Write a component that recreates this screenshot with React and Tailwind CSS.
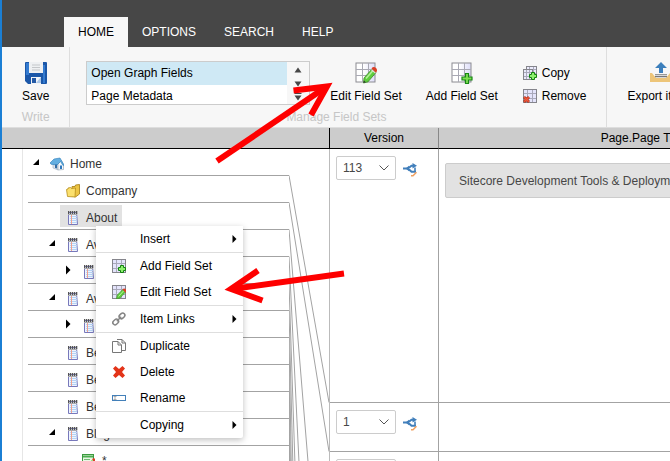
import React from "react";

function LargeGrid({ children }) {
  return (
    <svg width="22" height="22" viewBox="0 0 22 22" aria-hidden="true" className="block">
      <defs>
        <linearGradient id="cell" x1="0" y1="0" x2="1" y2="0">
          <stop offset="0.4" stopColor="#fff" />
          <stop offset="1" stopColor="#dcdcf8" />
        </linearGradient>
      </defs>
      <rect x="1" y="1" width="19" height="19" fill="url(#cell)" stroke="#8c8c92" />
      <path d="M7.5 1v19M13.5 1v19M1 7.5h19M1 13.5h19" stroke="#a9a9b4" fill="none" />
      {children}
    </svg>
  );
}

function SmallGrid({ children }) {
  return (
    <svg width="14" height="14" viewBox="0 0 14 14" aria-hidden="true" className="block shrink-0">
      <rect x="0.5" y="0.5" width="13" height="13" fill="#e4e4fb" stroke="#85858c" />
      <path d="M4.5 1v12M9.5 1v12M1 4.5h12M1 9.5h12" stroke="#a9a9bb" fill="none" />
      {children}
    </svg>
  );
}

function BigPencil() {
  return (
    <g>
      <path d="M8.5 21l.5-5 8-9 4 3.5-8 9.300z" fill="#5fce3d" stroke="#3c8b27" strokeWidth="0.8" />
      <path d="M11 16.500l7-8" stroke="#b6f29c" strokeWidth="1.500" />
      <path d="M16.500 7.500l4 3.500" stroke="#ddd" strokeWidth="1.500" />
      <path d="M16.500 6.500q2-2.500 4.500-.5 2 2 0 4.800z" fill="#dc3e25" />
      <path d="M8.500 21l.4-2.600 2 1.800z" fill="#333" />
    </g>
  );
}

function SmallPencil() {
  return (
    <g>
      <path d="M4.500 14l.8-4 5.500-5.500 2.700 2.500-5.500 6z" fill="#5fce3d" stroke="#3c8b27" strokeWidth="0.600" />
      <path d="M6.500 11.500l5-5.500" stroke="#b6f29c" />
      <path d="M10.500 4.500q1.500-2 3.500 0v3.500z" fill="#dc3e25" />
    </g>
  );
}

function SmallPlus() {
  return <path d="M8.500 6.500h3v2h2v3h-2v2h-3v-2h-2v-3h2z" fill="#8df06d" stroke="#12800f" />;
}

function SaveIcon() {
  return (
    <svg width="22" height="22" viewBox="0 0 22 22" aria-hidden="true" className="block">
      <path d="M1 0h20q1 0 1 1v20q0 1-1 1H3l-3-3V1q0-1 1-1z" fill="#1b57a8" />
      <path d="M1 1h3v12H1zM18 3h2v18h-2z" fill="#347bd0" />
      <path d="M4 0h14v11H4z" fill="#eef0f2" />
      <path d="M7 3h8M7 5.500h8M7 8h8" stroke="#c4c7ca" />
      <path d="M6 15h10v7H6z" fill="#f1f4f7" />
      <path d="M7 16h4v5H7z" fill="#2459a5" />
      <path d="M16 15v6h-5z" fill="#abc7e8" />
    </svg>
  );
}

function EditGrid() {
  return <LargeGrid><BigPencil /></LargeGrid>;
}

function AddGrid() {
  return (
    <LargeGrid>
      <path d="M14.500 11.500h3v3.500h3.500v3h-3.500v3.500h-3v-3.500h-3.500v-3h3.500z" fill="#7ddf53" stroke="#168713" strokeWidth="1.200" />
    </LargeGrid>
  );
}

function ExportIcon() {
  return (
    <svg width="22" height="22" viewBox="0 0 22 22" aria-hidden="true" className="block">
      <path d="M0 11h2l4 5h10l4-5h2v9H0z" fill="#edc579" />
      <path d="M5 12.500h12" stroke="#999" />
      <path d="M5 14.500h12" stroke="#777" strokeWidth="1.500" />
      <path d="M11 0l6 6h-4v5H9V6H5z" fill="#3c7fbc" />
    </svg>
  );
}

function CopyGridIcon() {
  return (
    <svg width="14" height="14" viewBox="0 0 14 14" aria-hidden="true" className="block">
      <rect x="3.500" y="0.500" width="10" height="10" fill="#ececfc" stroke="#85858c" />
      <path d="M6.500 1v9M10.500 1v9M4 3.500h9M4 7.500h9" stroke="#a9a9bb" fill="none" />
      <rect x="0.500" y="3.500" width="9" height="10" fill="#e9e9fa" stroke="#85858c" />
      <path d="M3.500 4v9M6.500 4v9M1 6.500h8M1 10.500h8" stroke="#a9a9bb" fill="none" />
      <SmallPlus />
    </svg>
  );
}

function RemoveGridIcon() {
  return (
    <SmallGrid>
      <path d="M1 8l5 5M6 8l-5 5" stroke="#a92b18" strokeWidth="2.800" />
      <path d="M1.200 8.200l4.600 4.600M5.800 8.200l-4.600 4.600" stroke="#f0573a" strokeWidth="1.600" />
    </SmallGrid>
  );
}

function LinkIcon() {
  return (
    <svg width="14" height="14" viewBox="0 0 14 14" aria-hidden="true" className="block shrink-0">
      <g fill="none" stroke="#858585" strokeWidth="1.500">
        <rect x="-3.100" y="-2.200" width="6.200" height="4.400" rx="2.200" transform="translate(3.700 10) rotate(-42)" />
        <rect x="-3.100" y="-2.200" width="6.200" height="4.400" rx="2.200" transform="translate(10 3.900) rotate(-42)" />
        <path d="M4.800 9.200l4.400-4.400" />
      </g>
    </svg>
  );
}

function DuplicateIcon() {
  return (
    <svg width="14" height="14" viewBox="0 0 14 14" aria-hidden="true" className="block shrink-0">
      <path d="M5 0.500h5l3.500 3.500v7.500h-4M10 0.500v3.500h3.500" fill="#fff" stroke="#777" />
      <path d="M0.500 2.500h5.500l3.500 3.500v7.500h-9zM6 2.500v3.500h3.500" fill="#fff" stroke="#777" />
    </svg>
  );
}

function DeleteIcon() {
  return (
    <svg width="14" height="14" viewBox="0 0 14 14" aria-hidden="true" className="block shrink-0">
      <path d="M3.500 1L7 4l3.500-3L13 3.500 10 7l3 3.500-2.500 2.500L7 10l-3.500 3L1 10.500 4 7 1 3.500z" fill="#e33419" />
    </svg>
  );
}

function RenameIcon() {
  return (
    <svg width="14" height="14" viewBox="0 0 14 14" aria-hidden="true" className="block shrink-0">
      <rect x="0.500" y="4.500" width="13" height="5" fill="#fff" stroke="#4380b9" />
      <path d="M1.500 5.500h3M3 5.500v3M1.500 8.500h3" stroke="#999" strokeWidth="0.800" />
    </svg>
  );
}

function HomeIcon() {
  return (
    <svg width="14" height="14" viewBox="0 0 14 14" aria-hidden="true" className="block shrink-0">
      <path d="M3 6l5 1v6l-5-2z" fill="#dfe6ee" stroke="#9cadc0" strokeWidth="0.600" />
      <path d="M8 7l3-4 2.500 4.500v5L8 13z" fill="#f4f7fa" stroke="#8d9db0" strokeWidth="0.600" />
      <path d="M0 6l4-4 6-1 4 7-1 .5-2.500-4L7 8 1 7.200z" fill="#63aee0" stroke="#2c7dbb" strokeWidth="0.600" />
      <path d="M5 7.500h2v4l-2-.600z" fill="#336da5" />
      <path d="M10 8.500h2v3.500h-2z" fill="#2d78bd" />
    </svg>
  );
}

function FolderIcon() {
  return (
    <svg width="14" height="14" viewBox="0 0 14 14" aria-hidden="true" className="block shrink-0">
      <path d="M6 2.500h3l.5-1.500 4-.5v9.500l-4 3-4-1z" fill="#edc544" stroke="#a47c12" strokeWidth="0.800" />
      <path d="M0.500 5.500l1.500-.5V4l2.500-.5 1 1 4-.5-.5 9-7.500-.5z" fill="#fbe06d" stroke="#b68d1b" strokeWidth="0.800" />
    </svg>
  );
}

function PageIcon() {
  return (
    <svg width="14" height="14" viewBox="0 0 14 14" aria-hidden="true" className="block shrink-0">
      <path d="M2.500 1.500h8l1 12h-9z" fill="#eef5ff" stroke="#7878bb" />
      <path d="M4 5.500h7M4 7.500h7M4 9.500h7M4 11.500h7" stroke="#b6d3f5" />
      <path d="M5.500 3v10" stroke="#f0a08c" />
      <path d="M2 1.500h9.500" stroke="#555" strokeWidth="3" strokeDasharray="1.300 0.700" />
      <path d="M2 3.500h9" stroke="#a9a9ae" />
    </svg>
  );
}

function FormIcon() {
  return (
    <svg width="14" height="14" viewBox="0 0 14 14" aria-hidden="true" className="block shrink-0">
      <rect x="0.500" y="0.500" width="11" height="13" fill="#e8f7e4" stroke="#3c9a40" />
      <path d="M1 1.500h10v2H1z" fill="#4caf50" />
      <path d="M2 5.500h6M2 7.500h6M2 9.500h4" stroke="#72b975" />
      <path d="M5 13l1-3 4-4 2 2-4 4z" fill="#5fce3d" />
      <path d="M10 5l2-1 1 1v2l-1 1z" fill="#dc3e25" />
    </svg>
  );
}

function TranslateIcon() {
  return (
    <svg width="14" height="14" viewBox="0 0 14 14" aria-hidden="true" className="block">
      <path d="M0 5.500h5M5 5.500L8.500 2.800H11M5 5.500l3.500 3.200H13" fill="none" stroke="#417fbb" strokeWidth="2" />
      <path d="M9.500 0l4.500 2.800-4.500 2.800zM2.500 5.500L6 2.800v5.400z" fill="#417fbb" />
      <path d="M12 4.500v4.500" stroke="#417fbb" strokeWidth="1.600" />
      <path d="M8 12.800h2l3.500-3.500" fill="none" stroke="#f0a060" strokeWidth="1.500" />
    </svg>
  );
}

function Expander({ state }) {
  return (
    <svg width="8" height="10" viewBox="0 0 8 10" aria-hidden="true" className="block">
      <path d={state === "open" ? "M7 2v6H1z" : "M2 0.500L6.500 5 2 9.500z"} fill="#000" />
    </svg>
  );
}

const tabs = ["HOME", "OPTIONS", "SEARCH", "HELP"];

const nodes = [
  { label: "Home", indent: "pl-1", state: "open", Icon: HomeIcon },
  { label: "Company", indent: "pl-5", Icon: FolderIcon },
  { label: "About", indent: "pl-5", Icon: PageIcon, selected: true },
  { label: "Av", indent: "pl-5", state: "open", Icon: PageIcon },
  { label: "", indent: "pl-9", state: "closed", Icon: PageIcon },
  { label: "Av", indent: "pl-5", state: "open", Icon: PageIcon },
  { label: "", indent: "pl-9", state: "closed", Icon: PageIcon },
  { label: "Be", indent: "pl-5", Icon: PageIcon },
  { label: "Be", indent: "pl-5", Icon: PageIcon },
  { label: "Be", indent: "pl-5", Icon: PageIcon },
  { label: "Blog", indent: "pl-5", state: "open", Icon: PageIcon },
  { label: "*", indent: "pl-9", Icon: FormIcon },
];

const menuGroups = [
  [{ label: "Insert", submenu: true }],
  [
    { label: "Add Field Set", icon: <SmallGrid><SmallPlus /></SmallGrid> },
    { label: "Edit Field Set", icon: <SmallGrid><SmallPencil /></SmallGrid> },
  ],
  [{ label: "Item Links", icon: <LinkIcon />, submenu: true }],
  [
    { label: "Duplicate", icon: <DuplicateIcon /> },
    { label: "Delete", icon: <DeleteIcon /> },
    { label: "Rename", icon: <RenameIcon /> },
  ],
  [{ label: "Copying", submenu: true }],
];

const rows = [
  { version: "113", height: "h-[253px]", value: "Sitecore Development Tools & Deployment" },
  { version: "1", height: "h-12" },
  { version: "1", height: "h-12" },
];

// Row edge on the tree side and the matching row edge on the grid side.
const connectors = [
  [26, 253], [53, 302], [80, 568], [107, 930], [134, 1340], [161, 1750],
  [188, 2400], [215, 3200], [242, 4200], [269, 5200], [296, 6200],
];

function RibbonGroup({ title, className, children }) {
  return (
    <section className={"flex shrink-0 flex-col border-r border-[#dedede] pt-3.5 " + className}>
      <div className="flex h-[45px]">{children}</div>
      <h2 className="mt-[3px] h-[18px] text-center leading-4 text-[#c6c6c6]">{title}</h2>
    </section>
  );
}

function LargeButton({ icon, label }) {
  return (
    <button type="button" className="flex flex-col items-center gap-1 whitespace-nowrap px-3 pt-px leading-4">
      {icon}
      {label}
    </button>
  );
}

function SmallButton({ icon, label }) {
  return (
    <button type="button" className="flex h-[23px] items-center gap-[5px] leading-4">
      {icon}
      {label}
    </button>
  );
}

function FieldSetList() {
  return (
    <div className="mr-2 flex h-11 w-56 overflow-hidden border border-[#ccc] bg-white">
      <ul role="listbox" aria-label="Field sets" className="flex-1">
        <li role="option" aria-selected="true" className="h-[23px] bg-[#cfe9f5] pl-1 leading-[23px]">Open Graph Fields</li>
        <li role="option" aria-selected="false" className="h-[23px] pl-1 leading-[23px]">Page Metadata</li>
      </ul>
      <div className="flex w-[22px] flex-col items-center bg-[#f7f7f7] pt-px">
        <button type="button" aria-label="Scroll up" className="flex h-3.5 items-center">
          <svg width="8" height="8" viewBox="0 0 8 8"><path d="M4 1.500l3.500 5h-7z" fill="#474747" /></svg>
        </button>
        <button type="button" aria-label="Scroll down" className="flex h-3.5 items-center">
          <svg width="8" height="8" viewBox="0 0 8 8"><path d="M0.500 1.500h7L4 6.500z" fill="#474747" /></svg>
        </button>
        <button type="button" aria-label="Show all" className="flex h-3.5 items-center">
          <svg width="8" height="8" viewBox="0 0 8 8"><path d="M0.500 0h7v1h-7zM0.500 2.500h7L4 7.500z" fill="#474747" /></svg>
        </button>
      </div>
    </div>
  );
}

function Tree() {
  return (
    <div className="flex pl-5">
      <ul role="tree" aria-label="Content" className="flex-1 border-l border-[#e6e6e6] pl-[5px]">
        {nodes.map(({ label, indent, state, Icon, selected }, i) => (
          <li key={i} role="treeitem" className={"flex h-[27px] items-center border-b border-[#a3a3a3] text-[#333] " + indent}>
            <span className="w-3 shrink-0">{state && <Expander state={state} />}</span>
            <span className={"flex h-[22px] items-center gap-1.5 pr-[5px] pl-1.5 pt-1 " + (selected ? "bg-[#e2e2e2]" : "")}>
              <Icon />
              {label}
            </span>
          </li>
        ))}
      </ul>
      <svg width="40" height="312" viewBox="0 0 40 312" aria-hidden="true" className="shrink-0">
        {connectors.map(([from, to]) => (
          <path key={from} d={`M0 ${from + 0.5}L40 ${to + 0.5}`} stroke="#a3a3a3" fill="none" />
        ))}
      </svg>
    </div>
  );
}

function VersionCell({ version, row }) {
  return (
    <div className="flex items-center gap-[7px] pl-1.5 pt-[7px]">
      <div className="grid w-[60px]">
        <select
          aria-label={"Version of row " + row}
          defaultValue={version}
          className="col-start-1 row-start-1 h-6 w-full appearance-none rounded-xs border border-[#ccc] bg-white pl-1.5 text-[#474747]"
        >
          <option>{version}</option>
        </select>
        <svg width="10" height="6" viewBox="0 0 10 6" aria-hidden="true" className="pointer-events-none col-start-1 row-start-1 mr-[7px] self-center justify-self-end">
          <path d="M0.500 0.500L5 5l4.500-4.500" fill="none" stroke="#555" />
        </svg>
      </div>
      <button type="button" aria-label="Versions" className="pt-1">
        <TranslateIcon />
      </button>
    </div>
  );
}

function Grid() {
  return (
    <table className="w-[517px] shrink-0 table-fixed border-separate border-spacing-0 self-start">
      <thead>
        <tr className="bg-[#ccc]">
          <th scope="col" className="w-[109px] border-r border-b border-r-[#888] border-b-black p-0 font-normal leading-5">Version</th>
          <th scope="col" className="border-b border-black p-0 font-normal leading-5">Page.Page Title</th>
        </tr>
      </thead>
      <tbody>
        {rows.map((row, i) => (
          <tr key={i} className="align-top">
            <td className="border-r border-b border-[#a3a3a3] p-0">
              <div className={row.height}>
                <VersionCell version={row.version} row={i + 1} />
              </div>
            </td>
            <td className="border-b border-[#a3a3a3] px-1.5 py-0">
              {row.value && (
                <input
                  type="text"
                  readOnly
                  aria-label="Page title"
                  defaultValue={row.value}
                  className="mt-3.5 block h-[35px] w-full rounded-xs border border-[#ccc] bg-[#e2e2e2] px-[13px] text-[#474747]"
                />
              )}
            </td>
          </tr>
        ))}
      </tbody>
    </table>
  );
}

function ContextMenu() {
  return (
    <div role="menu" className="absolute top-[226px] left-24 w-[147px] divide-y divide-[#dedede] rounded-b-xs bg-white shadow-[0_2px_6px_rgba(0,0,0,0.25)]">
      {menuGroups.map((group, i) => (
        <div key={i}>
          {group.map((item) => (
            <button key={item.label} type="button" role="menuitem" className="flex h-[26px] w-full items-center gap-3.5 pr-1.5 pl-4 text-left">
              <span className="w-3.5 shrink-0">{item.icon}</span>
              <span className="flex-1">{item.label}</span>
              {item.submenu && (
                <svg width="5" height="8" viewBox="0 0 5 8" aria-hidden="true"><path d="M0.500 0L4.500 4l-4 4z" fill="#000" /></svg>
              )}
            </button>
          ))}
        </div>
      ))}
    </div>
  );
}

function Arrows() {
  return (
    <svg width="360" height="310" viewBox="0 0 360 310" aria-hidden="true" className="pointer-events-none absolute top-0 left-0">
      <g fill="none" stroke="#fe0000" strokeWidth="6">
        <path d="M217 161L326 87" />
        <path d="M293.500 90.500L327 86.500L311 115" strokeMiterlimit="10" />
        <path d="M344 273.500L232 289" />
        <path d="M258 270.500L231 289L262.500 300.500" strokeMiterlimit="10" />
      </g>
    </svg>
  );
}

export default function App() {
  return (
    <div className="relative h-screen overflow-hidden border-l-2 border-[#1b7fd4] bg-white font-['Liberation_Sans',Arial,sans-serif] text-xs text-black">
      <nav className="flex h-[47px] items-end bg-[#474747] pl-[62px]">
        {tabs.map((tab, i) => (
          <a key={tab} href="#" className={"h-[30px] px-3.5 leading-[30px] " + (i === 0 ? "bg-[#f7f7f7] text-black" : "text-white")}>
            {tab}
          </a>
        ))}
      </nav>
      <div className="flex overflow-hidden border-b border-[#dedede] bg-[#f7f7f7]">
        <RibbonGroup title="Write" className="px-2">
          <LargeButton icon={<SaveIcon />} label="Save" />
        </RibbonGroup>
        <RibbonGroup title="Manage Field Sets" className="pr-5 pl-4">
          <FieldSetList />
          <LargeButton icon={<EditGrid />} label="Edit Field Set" />
          <LargeButton icon={<AddGrid />} label="Add Field Set" />
          <div className="ml-[13px]">
            <SmallButton icon={<CopyGridIcon />} label="Copy" />
            <SmallButton icon={<RemoveGridIcon />} label="Remove" />
          </div>
        </RibbonGroup>
        <RibbonGroup title="" className="px-2">
          <LargeButton icon={<ExportIcon />} label="Export items" />
        </RibbonGroup>
      </div>
      <main className="flex overflow-hidden">
        <div className="w-[328px] shrink-0">
          <div className="h-[21px] border-r border-b border-black bg-[#ccc]" />
          <div className="h-[354px] overflow-hidden border-r border-[#bbb]">
            <Tree />
          </div>
        </div>
        <Grid />
      </main>
      <div className="absolute top-0 -left-0.5">
        <ContextMenu />
        <Arrows />
      </div>
    </div>
  );
}
